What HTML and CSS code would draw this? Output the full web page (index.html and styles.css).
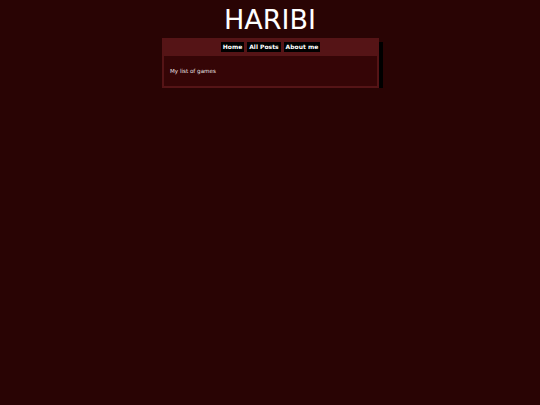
FILE: index.html
```html
<!DOCTYPE html>
<html>
<head>
<meta charset="utf-8">
<link rel="stylesheet" href="styles.css">
</head>
<body>
<h1 class="title">HARIBI</h1>
<div class="box">
  <nav class="nav">
    <a class="btn">Home</a>
    <a class="btn">All Posts</a>
    <a class="btn">About me</a>
  </nav>
  <div class="content">
    <p class="text">My list of games</p>
  </div>
</div>
</body>
</html>
```
FILE: styles.css
```css
html, body {
  margin: 0;
  padding: 0;
  background: #290404;
  font-family: "DejaVu Sans", Verdana, sans-serif;
  color: #fff;
}
body {
  padding-top: 5px;
}
.title {
  margin: 0;
  height: 33px;
  text-align: center;
  font-weight: normal;
  font-size: 27px;
  line-height: 29px;
}
.box {
  width: 213px;
  margin-left: 162px;
  background: #551416;
  padding: 0 2px 2px 2px;
  box-shadow: 4px 4px 0 #000;
}
.nav {
  height: 18px;
  display: flex;
  justify-content: center;
  align-items: center;
  gap: 3px;
}
.btn {
  background: #000;
  color: #fff;
  font-weight: bold;
  font-size: 6px;
  line-height: 10px;
  padding: 0 2px;
}
.content {
  background: #350506;
  height: 30px;
  padding: 0 6px;
  display: flex;
  align-items: center;
}
.text {
  margin: 0;
  font-size: 5.6px;
  color: #e8e0e0;
}
```
